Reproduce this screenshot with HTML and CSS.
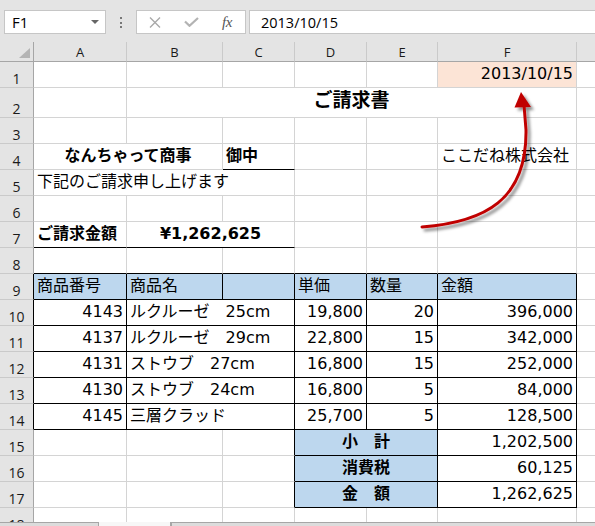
FILE: index.html
```html
<!DOCTYPE html>
<html>
<head>
  <title>ご請求書</title>
  <meta charset="UTF-8" />
  <link rel="stylesheet" href="styles.css">
</head>
<body>
  <div class="toolbar">
    <div class="namebox">F1<span class="caret"></span></div>
    <div class="grip"><i></i><i></i><i></i></div>
    <div class="fxbox">
      <span class="slot">
        <svg width="12" height="11" viewBox="0 0 12 11"><path d="M1 0.5 L11 10.5 M11 0.5 L1 10.5" stroke="#a9a9a9" stroke-width="1.4" fill="none"/></svg>
      </span>
      <span class="slot">
        <svg width="15" height="10" viewBox="0 0 15 10"><path d="M1 4.5 L5.5 8.8 L14 1" stroke="#b3b3b3" stroke-width="2.2" fill="none"/></svg>
      </span>
      <span class="slot fx">fx</span>
    </div>
    <div class="formula">2013/10/15</div>
  </div>

  <div class="sheet">
    <div class="corner"><span></span></div>
    <div class="ch">A</div><div class="ch">B</div><div class="ch">C</div>
    <div class="ch">D</div><div class="ch">E</div><div class="ch">F</div><div class="ch"></div>

    <div class="rh">1</div>
    <div class="c"></div><div class="c"></div><div class="c"></div><div class="c"></div><div class="c"></div>
    <div class="c peach r">2013/10/15</div><div class="c"></div>

    <div class="rh">2</div>
    <div class="c"></div><div class="c s5 title">ご請求書</div><div class="c"></div>

    <div class="rh">3</div>
    <div class="c"></div><div class="c"></div><div class="c"></div><div class="c"></div><div class="c"></div><div class="c"></div><div class="c"></div>

    <div class="rh">4</div>
    <div class="c s2 ctr b">なんちゃって商事</div><div class="c b kb">御中</div>
    <div class="c"></div><div class="c"></div><div class="c">ここだね株式会社</div><div class="c"></div>

    <div class="rh">5</div>
    <div class="c s3">下記のご請求申し上げます</div>
    <div class="c"></div><div class="c"></div><div class="c"></div><div class="c"></div>

    <div class="rh">6</div>
    <div class="c"></div><div class="c"></div><div class="c"></div><div class="c"></div><div class="c"></div><div class="c"></div><div class="c"></div>

    <div class="rh">7</div>
    <div class="c b kb">ご請求金額</div><div class="c s2 ctr b kb">¥1,262,625</div>
    <div class="c"></div><div class="c"></div><div class="c"></div><div class="c"></div>

    <div class="rh">8</div>
    <div class="c kb"></div><div class="c kb"></div><div class="c kb"></div><div class="c kb"></div><div class="c kb"></div><div class="c kb"></div><div class="c"></div>

    <div class="rh kr">9</div>
    <div class="c hd">商品番号</div><div class="c hd">商品名</div><div class="c hd"></div>
    <div class="c hd">単価</div><div class="c hd">数量</div><div class="c hd">金額</div><div class="c"></div>

    <div class="rh kr">10</div>
    <div class="c r k">4143</div><div class="c s2 k">ルクルーゼ　25cm</div>
    <div class="c r k">19,800</div><div class="c r k">20</div><div class="c r k">396,000</div><div class="c"></div>

    <div class="rh kr">11</div>
    <div class="c r k">4137</div><div class="c s2 k">ルクルーゼ　29cm</div>
    <div class="c r k">22,800</div><div class="c r k">15</div><div class="c r k">342,000</div><div class="c"></div>

    <div class="rh kr">12</div>
    <div class="c r k">4131</div><div class="c s2 k">ストウブ　27cm</div>
    <div class="c r k">16,800</div><div class="c r k">15</div><div class="c r k">252,000</div><div class="c"></div>

    <div class="rh kr">13</div>
    <div class="c r k">4130</div><div class="c s2 k">ストウブ　24cm</div>
    <div class="c r k">16,800</div><div class="c r k">5</div><div class="c r k">84,000</div><div class="c"></div>

    <div class="rh kr">14</div>
    <div class="c r k">4145</div><div class="c s2 k">三層クラッド</div>
    <div class="c r k">25,700</div><div class="c r k">5</div><div class="c r k">128,500</div><div class="c"></div>

    <div class="rh">15</div>
    <div class="c"></div><div class="c"></div><div class="c kr"></div>
    <div class="c s2 ctr b blue k">小　計</div><div class="c r k">1,202,500</div><div class="c"></div>

    <div class="rh">16</div>
    <div class="c"></div><div class="c"></div><div class="c kr"></div>
    <div class="c s2 ctr b blue k">消費税</div><div class="c r k">60,125</div><div class="c"></div>

    <div class="rh">17</div>
    <div class="c"></div><div class="c"></div><div class="c kr"></div>
    <div class="c s2 ctr b blue k">金　額</div><div class="c r k">1,262,625</div><div class="c"></div>

    <div class="rh">18</div>
    <div class="c"></div><div class="c"></div><div class="c"></div><div class="c"></div><div class="c"></div><div class="c"></div><div class="c"></div>
  </div>

  <div class="tabs">
    <div class="tab"></div>
    <div class="tab active"></div>
    <div class="tab rest"></div>
  </div>

  <!-- red call-out arrow drawn over the sheet -->
  <svg class="arrow" width="595" height="526" viewBox="0 0 595 526">
    <defs>
      <filter id="shade" x="-20%" y="-20%" width="140%" height="140%">
        <feDropShadow dx="3" dy="3" stdDeviation="1.6" flood-color="#000" flood-opacity="0.45"/>
      </filter>
    </defs>
    <g filter="url(#shade)">
      <path d="M422 227 C 485 222, 527 200, 526 130 L 524 105" stroke="#c00000" stroke-width="3" fill="none" stroke-linecap="round"/>
      <polygon points="521,92 514.5,107.5 531,107" fill="#c00000"/>
    </g>
  </svg>
</body>
</html>
```

FILE: styles.css
```css
body {
  margin: 0;
  width: 595px;
  height: 526px;
  overflow: hidden;
  position: relative;
  background: #e4e4e4;
  font-family: "DejaVu Sans", "Noto Sans CJK JP", sans-serif;
  color: #000;
}

/* formula bar */
.toolbar {
  height: 42px;
  box-sizing: border-box;
  padding-top: 10px;
  display: flex;
  align-items: flex-start;
}

.namebox {
  margin-left: 4px;
  width: 102px;
  height: 24px;
  box-sizing: border-box;
  border: 1px solid #c6c6c6;
  background: #fff;
  display: flex;
  align-items: center;
  justify-content: space-between;
  padding: 0 6px 0 7px;
  font: 15px "Open Sans", sans-serif;
}

.caret {
  width: 0;
  height: 0;
  border-left: 4px solid transparent;
  border-right: 4px solid transparent;
  border-top: 4px solid #666;
}

.grip {
  margin: 7px 0 0 14px;
  display: flex;
  flex-direction: column;
  gap: 2.5px;
}

.grip i {
  display: block;
  width: 2px;
  height: 2px;
  background: #777;
}

.fxbox {
  margin-left: 14px;
  width: 110px;
  height: 24px;
  box-sizing: border-box;
  border: 1px solid #c6c6c6;
  background: #fff;
  display: flex;
}

.slot {
  width: 36px;
  display: flex;
  align-items: center;
  justify-content: center;
}

.fx {
  font: italic 15px "Liberation Serif", serif;
  color: #555;
  letter-spacing: -0.5px;
}

.formula {
  margin-left: 3px;
  flex: 1;
  height: 24px;
  box-sizing: border-box;
  border: 1px solid #c6c6c6;
  border-right: none;
  background: #fff;
  padding-left: 11px;
  display: flex;
  align-items: center;
  font: 14.5px "Open Sans", sans-serif;
}

/* the worksheet */
.sheet {
  width: 595px;
  height: 480px;
  overflow: hidden;
  background: #fff;
  display: grid;
  grid-template-columns: 34px 93px 96px 72px 72px 71px 139px 80px;
  grid-template-rows: 20px 26px 30px repeat(16, 26px);
}

.corner,
.ch,
.rh {
  background: #e4e4e4;
  box-sizing: border-box;
  font: 13px "Open Sans", sans-serif;
  color: #1a1a1a;
  display: flex;
}

.corner {
  border-right: 1px solid #a6a6a6;
  border-bottom: 1px solid #a6a6a6;
  align-items: flex-end;
  justify-content: flex-end;
  padding: 0 3px 3px 0;
}

.corner span {
  width: 0;
  height: 0;
  border-left: 11px solid transparent;
  border-bottom: 10px solid #b4b4b4;
}

.ch {
  border-right: 1px solid #cacaca;
  border-bottom: 1px solid #a6a6a6;
  align-items: center;
  justify-content: center;
}

.rh {
  border-right: 1px solid #a6a6a6;
  border-bottom: 1px solid #cacaca;
  align-items: flex-end;
  justify-content: center;
  font-size: 14px;
  line-height: 1;
  padding-bottom: 1px;
}

.c {
  box-sizing: border-box;
  border-right: 1px solid #d4d4d4;
  border-bottom: 1px solid #d4d4d4;
  padding: 0 3px 3px 3px;
  display: flex;
  align-items: flex-end;
  white-space: nowrap;
  font-size: 16px;
  line-height: 20px;
}

.s2 { grid-column: span 2; }
.s3 { grid-column: span 3; }
.s5 { grid-column: span 5; }

.r { justify-content: flex-end; }
.ctr { justify-content: center; }
.b { font-weight: bold; }

.title {
  justify-content: center;
  font-size: 19px;
  font-weight: bold;
  padding-bottom: 7px;
}

.peach { background: #fce4d6; }
.blue { background: #bdd7ee; }

.kb { border-bottom-color: #000; }
.kr { border-right-color: #000; }
.k { border-bottom-color: #000; border-right-color: #000; }

.hd {
  background: #bdd7ee;
  border-bottom-color: #000;
  border-right-color: #000;
}

/* sheet tabs strip */
.tabs {
  height: 4px;
  display: flex;
}

.tab {
  width: 99px;
  box-sizing: border-box;
  border-top: 1px solid #a6a6a6;
  border-right: 1px solid #a6a6a6;
  background: #dcdcdc;
}

.tab.active {
  width: 72px;
  border-top: none;
  background: #f7f7f7;
}

.tab.rest {
  flex: 1;
  border-right: none;
  border-left: 1px solid #a6a6a6;
}

.arrow {
  position: absolute;
  left: 0;
  top: 0;
  pointer-events: none;
}
```
